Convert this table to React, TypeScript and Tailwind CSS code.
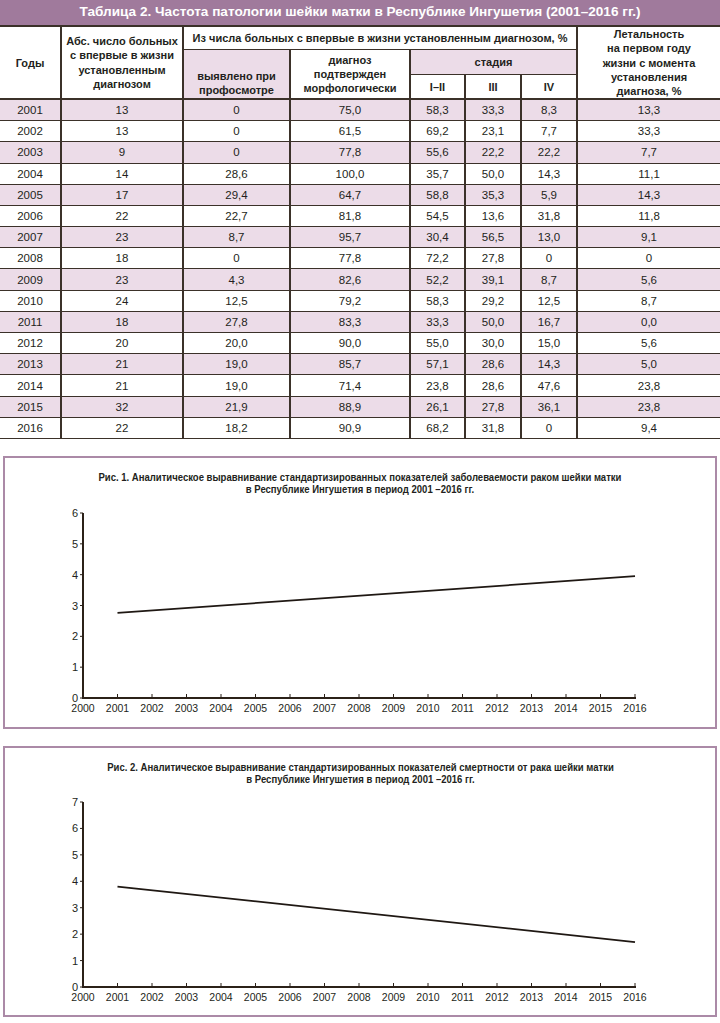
import React from "react";

const rows: string[][] = [
  ["2001", "13", "0", "75,0", "58,3", "33,3", "8,3", "13,3"],
  ["2002", "13", "0", "61,5", "69,2", "23,1", "7,7", "33,3"],
  ["2003", "9", "0", "77,8", "55,6", "22,2", "22,2", "7,7"],
  ["2004", "14", "28,6", "100,0", "35,7", "50,0", "14,3", "11,1"],
  ["2005", "17", "29,4", "64,7", "58,8", "35,3", "5,9", "14,3"],
  ["2006", "22", "22,7", "81,8", "54,5", "13,6", "31,8", "11,8"],
  ["2007", "23", "8,7", "95,7", "30,4", "56,5", "13,0", "9,1"],
  ["2008", "18", "0", "77,8", "72,2", "27,8", "0", "0"],
  ["2009", "23", "4,3", "82,6", "52,2", "39,1", "8,7", "5,6"],
  ["2010", "24", "12,5", "79,2", "58,3", "29,2", "12,5", "8,7"],
  ["2011", "18", "27,8", "83,3", "33,3", "50,0", "16,7", "0,0"],
  ["2012", "20", "20,0", "90,0", "55,0", "30,0", "15,0", "5,6"],
  ["2013", "21", "19,0", "85,7", "57,1", "28,6", "14,3", "5,0"],
  ["2014", "21", "19,0", "71,4", "23,8", "28,6", "47,6", "23,8"],
  ["2015", "32", "21,9", "88,9", "26,1", "27,8", "36,1", "23,8"],
  ["2016", "22", "18,2", "90,9", "68,2", "31,8", "0", "9,4"],
];

const years = Array.from({ length: 17 }, (_, i) => 2000 + i);

function Chart({
  title1,
  title2,
  max,
  y0,
  yMax,
  from,
  to,
  svgH,
}: {
  title1: string;
  title2: string;
  max: number;
  y0: number;
  yMax: number;
  from: number;
  to: number;
  svgH: number;
}) {
  const ax = 78;
  const step = 34.5;
  const unit = (y0 - yMax) / max;
  const xOf = (yr: number) => ax + (yr - 2000) * step;
  const yOf = (v: number) => y0 - v * unit;
  const ticks = Array.from({ length: max + 1 }, (_, i) => i);
  return (
    <div className="mx-[3px] border-2 border-[#ab8aa7] bg-white">
      <div className="h-[40px] pt-[13px] text-center text-[11px] leading-[12px] font-bold text-[#231f20]">
        <div className="inline-block scale-x-[0.866] origin-center whitespace-nowrap">
          <div>{title1}</div>
          <div>{title2}</div>
        </div>
      </div>
      <svg width="710" height={svgH} className="block" style={{ fontFamily: '"Liberation Sans", Arial, sans-serif' }}>
        <line x1={ax} y1={yMax} x2={ax} y2={y0 + 1} stroke="#2b2118" strokeWidth="2" />
        <line x1={ax - 1} y1={y0} x2={xOf(2016) + 1} y2={y0} stroke="#2b2118" strokeWidth="2" />
        {ticks.map((t) => (
          <g key={t}>
            <line x1={ax - 3} y1={yOf(t)} x2={ax} y2={yOf(t)} stroke="#2b2118" strokeWidth="1" />
            <text x={ax - 5} y={yOf(t) + 4} fontSize="11" textAnchor="end" fill="#231f20">
              {t}
            </text>
          </g>
        ))}
        {years.map((yr) => (
          <g key={yr}>
            {yr > 2000 && (
              <line x1={xOf(yr)} y1={y0 - 4} x2={xOf(yr)} y2={y0} stroke="#2b2118" strokeWidth="1" />
            )}
            <text x={xOf(yr)} y={y0 + 14} fontSize="10.5" textAnchor="middle" fill="#231f20">
              {yr}
            </text>
          </g>
        ))}
        <line x1={xOf(2001)} y1={yOf(from)} x2={xOf(2016)} y2={yOf(to)} stroke="#1f1813" strokeWidth="1.8" />
      </svg>
    </div>
  );
}

export default function App() {
  const bd = "border-[#3b3129]";
  const th = `border-x-2 border-b ${bd} font-bold text-[11px] leading-[14.3px] text-center text-[#231f20] px-1`;
  return (
    <div className="w-[720px] bg-white" style={{ fontFamily: '"Liberation Sans", Arial, sans-serif' }}>
      <div className="h-[27px] bg-[#a07a9c] flex items-center justify-center text-white font-bold text-[13.6px] border-b-2 border-[#3b3129]">
        Таблица 2. Частота патологии шейки матки в Республике Ингушетия (2001–2016 гг.)
      </div>
      <table className="w-[720px] border-collapse table-fixed">
        <colgroup>
          <col className="w-[61px]" />
          <col className="w-[122px]" />
          <col className="w-[107px]" />
          <col className="w-[120px]" />
          <col className="w-[55px]" />
          <col className="w-[56px]" />
          <col className="w-[56px]" />
          <col className="w-[143px]" />
        </colgroup>
        <thead>
          <tr className="h-[22px]">
            <th rowSpan={3} className={`${th} border-l-0`}>Годы</th>
            <th rowSpan={3} className={th}>
              Абс. число больных
              <br />с впервые в жизни
              <br />
              установленным
              <br />
              диагнозом
            </th>
            <th colSpan={5} className={`${th} whitespace-nowrap`}>
              Из числа больных с впервые в жизни установленным диагнозом, %
            </th>
            <th rowSpan={3} className={`${th} border-r-0 whitespace-nowrap`}>
              Летальность
              <br />
              на первом году
              <br />
              жизни с момента
              <br />
              установления
              <br />
              диагноза, %
            </th>
          </tr>
          <tr className="h-[23px]">
            <th rowSpan={2} className={`${th} bg-[#ecdce8] pt-[18px]`}>выявлено при профосмотре</th>
            <th rowSpan={2} className={th}>диагноз подтвержден морфологически</th>
            <th colSpan={3} className={`${th} bg-[#ecdce8]`}>стадия</th>
          </tr>
          <tr className="h-[24px]">
            <th className={th}>I–II</th>
            <th className={th}>III</th>
            <th className={th}>IV</th>
          </tr>
        </thead>
        <tbody>
          {rows.map((r, i) => (
            <tr key={r[0]} className={`h-[21.2px] ${i % 2 === 0 ? "bg-[#ecdce8]" : "bg-white"}`}>
              {r.map((c, j) => (
                <td
                  key={j}
                  className={`border-x-2 border-y ${bd} text-center text-[11.5px] leading-[14px] text-[#231f20] p-0 ${
                    j === 0 ? "border-l-0" : ""
                  } ${j === 7 ? "border-r-0" : ""} ${i === 0 ? "border-t-2" : ""}`}
                >
                  {c}
                </td>
              ))}
            </tr>
          ))}
        </tbody>
      </table>
      <div className="h-[17px]" />
      <Chart
        title1="Рис. 1. Аналитическое выравнивание стандартизированных показателей заболеваемости раком шейки матки"
        title2="в  Республике Ингушетия в период 2001 –2016 гг."
        max={6}
        y0={200}
        yMax={15}
        from={2.76}
        to={3.95}
        svgH={229}
      />
      <div className="h-[17px]" />
      <Chart
        title1="Рис. 2. Аналитическое выравнивание стандартизированных показателей смертности от рака шейки матки"
        title2="в Республике Ингушетия в период 2001 –2016 гг."
        max={7}
        y0={199}
        yMax={14}
        from={3.8}
        to={1.7}
        svgH={227}
      />
    </div>
  );
}
